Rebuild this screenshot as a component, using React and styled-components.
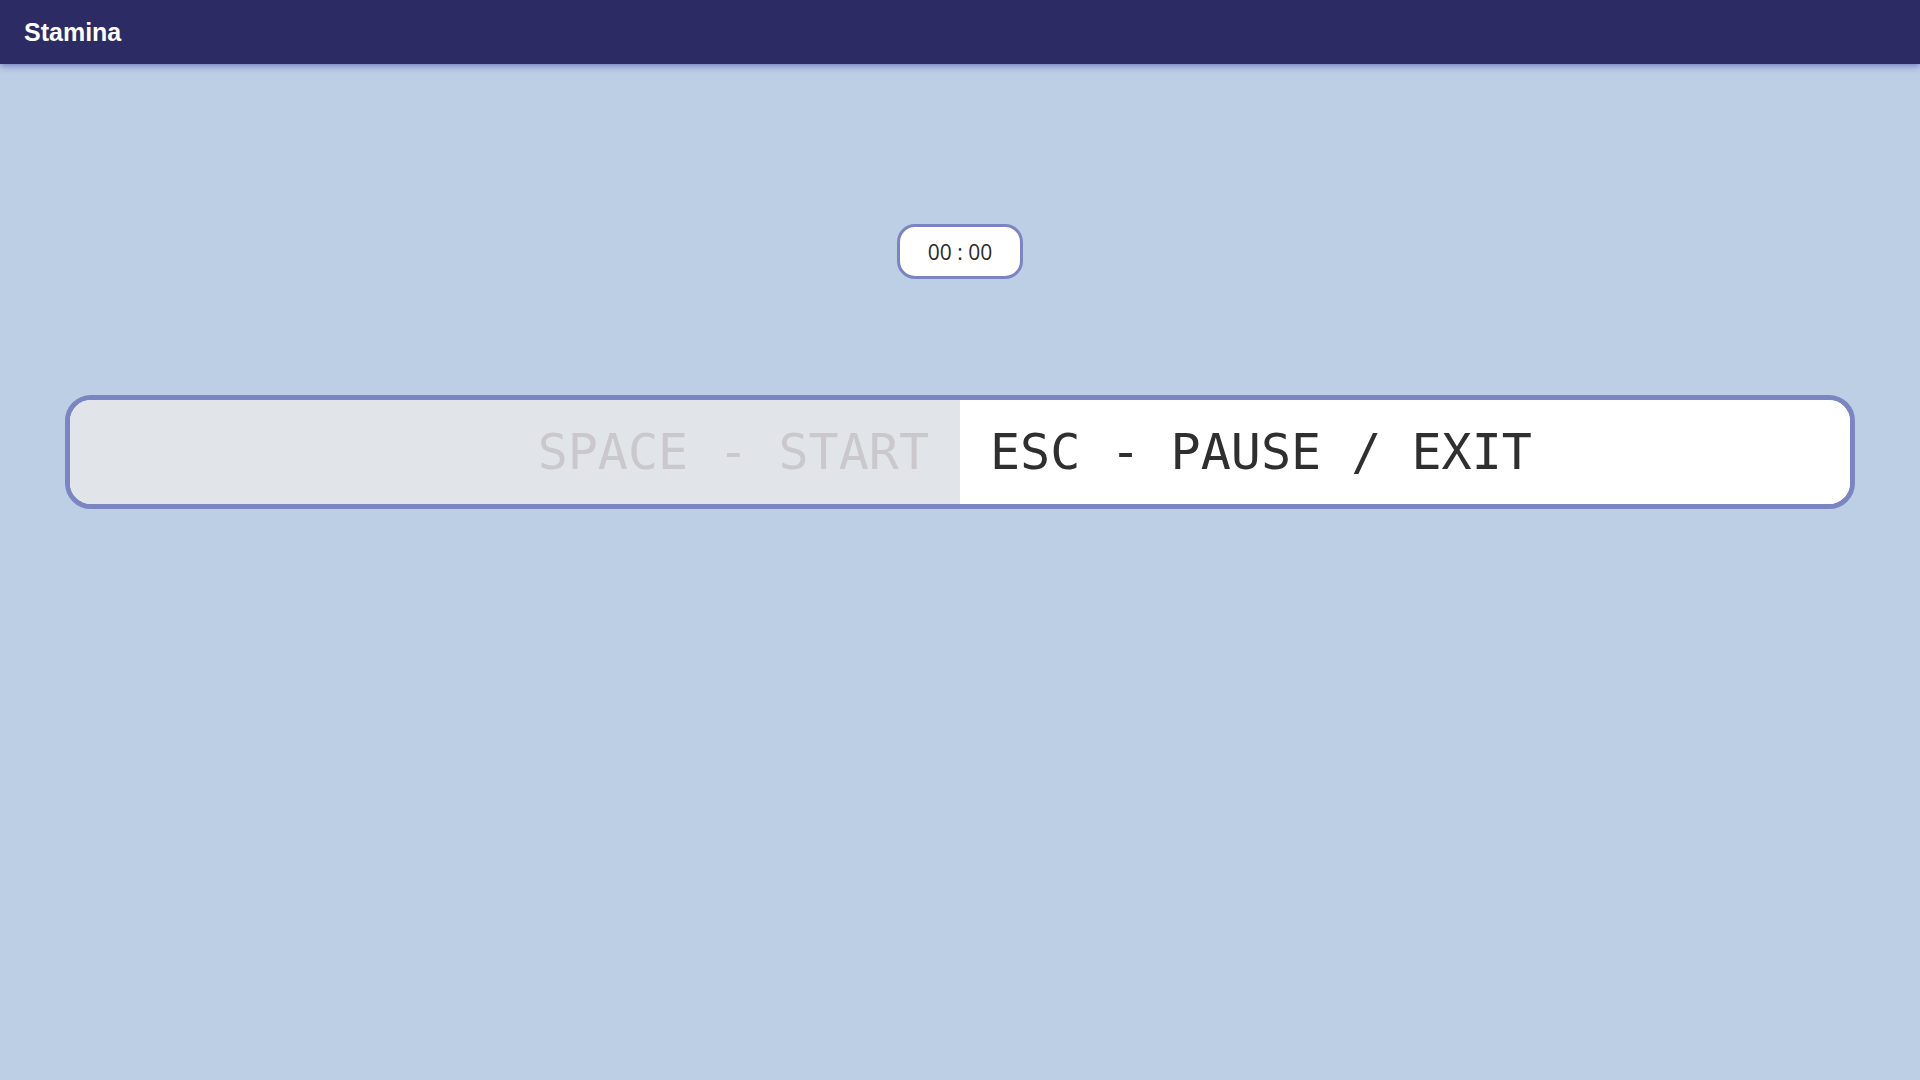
import styled, { createGlobalStyle } from 'styled-components';

const GlobalStyle = createGlobalStyle`
  html, body {
    margin: 0;
    padding: 0;
    background-color: #bccfe4;
    font-family: "Liberation Sans", Arial, sans-serif;
  }
`;

const Page = styled.div`
  min-height: 100vh;
  display: flex;
  flex-direction: column;
  background-color: #bccfe4;
`;

const Header = styled.header`
  height: 64px;
  display: flex;
  align-items: center;
  padding-left: 24px;
  background-color: #2d2b63;
  box-shadow: 0 2px 7px rgba(60, 70, 170, 0.6);
`;

const Brand = styled.span`
  font-family: "Liberation Sans", Arial, sans-serif;
  font-size: 25px;
  font-weight: bold;
  color: #ffffff;
`;

const Main = styled.main`
  display: flex;
  flex-direction: column;
  align-items: center;
  padding: 160px 65px 0;
`;

const Timer = styled.div`
  box-sizing: border-box;
  width: 126px;
  height: 55px;
  display: flex;
  align-items: center;
  justify-content: center;
  background-color: #ffffff;
  border: 3px solid #7b85c2;
  border-radius: 18px;
  font-family: "Open Sans", "Noto Sans", sans-serif;
  font-size: 21px;
  color: #2a2a2a;
`;

const TypingBar = styled.div`
  box-sizing: border-box;
  width: 100%;
  height: 114px;
  margin-top: 116px;
  display: grid;
  grid-template-columns: 1fr 1fr;
  border: 5px solid #7b85c2;
  border-radius: 26px;
  overflow: hidden;
  background-color: #ffffff;
`;

const Half = styled.div`
  display: flex;
  align-items: center;
  justify-content: ${(p) => (p.$done ? 'flex-end' : 'flex-start')};
  padding: ${(p) => (p.$done ? '0 31px 0 0' : '0 0 0 30px')};
  background-color: ${(p) => (p.$done ? '#e1e5e9' : '#ffffff')};
  color: ${(p) => (p.$done ? '#cbc8cd' : '#2f2f2f')};
  font-family: "DejaVu Sans Mono", "Liberation Mono", monospace;
  font-size: 50px;
  white-space: pre;
  overflow: hidden;
`;

const App = () => {
  return (
    <Page>
      <GlobalStyle />
      <Header>
        <Brand>Stamina</Brand>
      </Header>
      <Main>
        <Timer>00 : 00</Timer>
        <TypingBar>
          <Half $done>SPACE - START</Half>
          <Half>ESC - PAUSE / EXIT</Half>
        </TypingBar>
      </Main>
    </Page>
  );
};

export default App;
